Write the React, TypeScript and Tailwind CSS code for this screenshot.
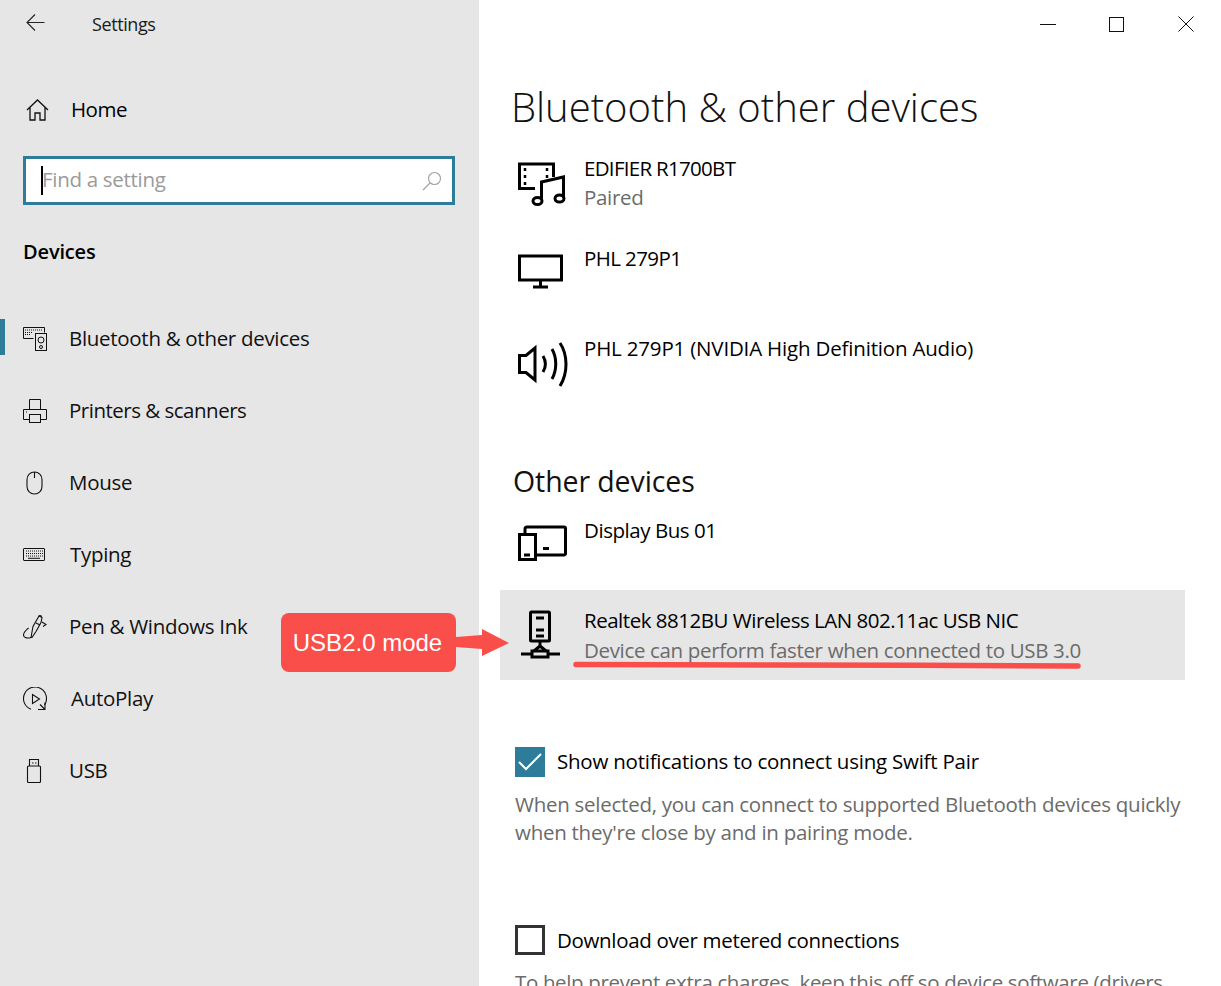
import type { ReactNode } from "react";

const font = { fontFamily: '"Open Sans", "Noto Sans", sans-serif' };

// Thin sidebar icons, drawn on a 24px box
const BluetoothIcon = () => (
  <svg width="24" height="24" viewBox="0 0 24 24" fill="none" stroke="#111" strokeWidth="1">
    <path d="M10.5 11.5H.5V.5h21v5" />
    <path d="M2 3h17M2 5.500h8M2 7.500h6" strokeDasharray="1 1" />
    <rect x="12.500" y="6.500" width="11" height="17" />
    <circle cx="18" cy="13" r="3" />
    <circle cx="18" cy="20" r="1.500" />
  </svg>
);
const PrinterIcon = () => (
  <svg width="24" height="24" viewBox="0 0 24 24" fill="none" stroke="#111" strokeWidth="1">
    <path d="M6.500 10V.5h11V10" />
    <path d="M6 20.500H.5V10.500h23v10H18" />
    <rect x="6.500" y="15.500" width="11" height="8" />
    <path d="M3 13h1" />
  </svg>
);
const MouseIcon = () => (
  <svg width="18" height="24" viewBox="0 0 18 24" fill="none" stroke="#111" strokeWidth="1.100">
    <rect x="1" y="1" width="15" height="22" rx="7.500" />
    <path d="M8.500 1v6" />
  </svg>
);
const KeyboardIcon = () => (
  <svg width="24" height="24" viewBox="0 0 24 24" fill="none" stroke="#111" strokeWidth="1">
    <rect x=".5" y="5.500" width="21" height="12" rx=".5" />
    <path d="M3 8h17M3 10.500h17M3 13h17" strokeDasharray="1 1" strokeWidth="1.200" />
    <path d="M5 15.300h12" />
  </svg>
);
const PenIcon = () => (
  <svg width="24" height="24" viewBox="0 0 24 24" fill="none" stroke="#111" strokeWidth="1.100">
    <path d="M8 22.500 10 11.500 16 1l3 1.500-1 5-5 9-4 6z" />
    <path d="M13 8l4 2M16 1l1-.5 2 1M19 7l4 2.500-3 2" />
    <path d="M8 22.500C3 24 .5 22 .5 20c0-3 3-5 5-7" />
  </svg>
);
const AutoPlayIcon = () => (
  <svg width="24" height="24" viewBox="0 0 24 24" fill="none" stroke="#111" strokeWidth="1.100">
    <path d="M8 22.300A11.500 11.500 0 1 1 21.500 18" />
    <path d="M9.500 7.500v9l7-4.500z" />
    <path d="M22 15.500v7h-7M22 22.500l-5-5" />
  </svg>
);
const UsbIcon = () => (
  <svg width="18" height="24" viewBox="0 0 18 24" fill="none" stroke="#111" strokeWidth="1.100">
    <path d="M4.500 7V.5h9V7" />
    <rect x="2.500" y="7" width="13" height="16.500" rx="1" />
    <path d="M7 4h1.500M10 4h1.500" />
  </svg>
);

const nav: { label: string; icon: ReactNode; active?: boolean; textClass: string; iconClass: string }[] = [
  { label: "Bluetooth & other devices", icon: <BluetoothIcon />, active: true, textClass: "tracking-[-0.3px]", iconClass: "w-[46px]" },
  { label: "Printers & scanners", icon: <PrinterIcon />, textClass: "tracking-[-0.5px]", iconClass: "w-[46px]" },
  { label: "Mouse", icon: <MouseIcon />, textClass: "tracking-[-0.3px]", iconClass: "w-[43px] ml-[3px]" },
  { label: "Typing", icon: <KeyboardIcon />, textClass: "tracking-[-0.3px] ml-[1px]", iconClass: "w-[46px]" },
  { label: "Pen & Windows Ink", icon: <PenIcon />, textClass: "tracking-[-0.3px]", iconClass: "w-[46px]" },
  { label: "AutoPlay", icon: <AutoPlayIcon />, textClass: "tracking-[-0.3px] ml-[2px]", iconClass: "w-[46px]" },
  { label: "USB", icon: <UsbIcon />, textClass: "tracking-[-0.3px]", iconClass: "w-[44px] ml-[2px]" },
];

// Heavy device icons on the right
const MediaIcon = () => (
  <svg width="50" height="46" viewBox="0 0 50 46" fill="none" stroke="#000" strokeWidth="3">
    <path d="M17 26.500H1.500V2h34v13" />
    <path d="M7 6v3M7 13v3M7 20v3M29 6v3M29 13v3" strokeWidth="2.500" />
    <path d="M23.500 38V20l22-5v21" />
    <ellipse cx="19.500" cy="39" rx="4.500" ry="3.500" />
    <ellipse cx="41.500" cy="36.500" rx="4.500" ry="3.500" />
  </svg>
);
const MonitorIcon = () => (
  <svg width="50" height="46" viewBox="0 0 50 46" fill="none" stroke="#000" strokeWidth="3">
    <rect x="1.500" y="12" width="42" height="24" />
    <path d="M22.500 36v7M15 43h15" />
  </svg>
);
const SpeakerIcon = () => (
  <svg width="50" height="46" viewBox="0 0 50 46" fill="none" stroke="#000" strokeWidth="3">
    <path d="M1.500 14.500h6.500L17 7v32l-9-7.500H1.500z" />
    <path d="M25 15c3 5 3 11 0 16M34 8c5 9 5 21 0 30M42 2c8 12 8 30 0 43" />
  </svg>
);
const DisplayBusIcon = () => (
  <svg width="50" height="46" viewBox="0 0 50 46" fill="none" stroke="#000" strokeWidth="3">
    <path d="M7 10V5a2 2 0 0 1 2-2h37a1.500 1.500 0 0 1 1.500 1.500v25a1.500 1.500 0 0 1-1.500 1.500H18" />
    <rect x="1.500" y="10.500" width="16" height="25" />
    <path d="M25 24.500h6M6 31h6" />
  </svg>
);
const NetworkIcon = () => (
  <svg width="42" height="50" viewBox="0 0 42 50" fill="none" stroke="#000" strokeWidth="3">
    <rect x="10.500" y="2" width="19" height="29" rx="1" />
    <path d="M16 8h8M16 20h8M16 26h8" />
    <path d="M20 31v5M20 36l-6 5M20 36l6 5" />
    <rect x="12" y="41" width="16" height="6" />
    <path d="M1 44h11M28 44h12" />
  </svg>
);

const devices: { name: string; sub?: string; icon: ReactNode; iconClass: string; nameClass: string }[] = [
  { name: "EDIFIER R1700BT", sub: "Paired", icon: <MediaIcon />, iconClass: "mt-[22px]", nameClass: "tracking-[-0.7px]" },
  { name: "PHL 279P1", icon: <MonitorIcon />, iconClass: "mt-[14px]", nameClass: "tracking-[-0.6px]" },
  { name: "PHL 279P1 (NVIDIA High Definition Audio)", icon: <SpeakerIcon />, iconClass: "mt-[21px]", nameClass: "tracking-[-0.18px]" },
];

export default function App() {
  return (
    <div className="relative flex h-[986px] w-[1221px] overflow-hidden bg-white text-black" style={font}>
      <aside className="w-[479px] shrink-0 bg-[#e6e6e6]">
        <div className="flex h-[48px] items-center pl-[26px]">
          <svg width="19" height="18" viewBox="0 0 19 18" fill="none" stroke="#222" strokeWidth="1.100" className="-mt-[2px]">
            <path d="M18.500 8.500H1M9 .5l-8 8 8 8" />
          </svg>
          <span className="ml-[47px] text-[18px] tracking-[-0.4px] text-[#1a1a1a]">Settings</span>
        </div>
        <div className="mt-[26px] flex h-[72px] items-center pl-[26px]">
          <svg width="23" height="22" viewBox="0 0 23 22" fill="none" stroke="#111" strokeWidth="1.300">
            <path d="M1 11 11.500 1 22 11M4 8.500V21h5v-7h5v7h5V8.500" />
          </svg>
          <span className="ml-[22px] pb-[2px] text-[20.500px] tracking-[-0.5px]">Home</span>
        </div>
        <div className="mx-[23px] mt-[10px] flex h-[49px] w-[432px] items-center border-[3px] border-[#2d7d9a] bg-white pl-[15px] pr-[10px]">
          <span className="h-[29px] w-[2px] bg-black" />
          <span className="ml-[-1px] flex-1 pb-[2px] text-[20.500px] tracking-[-0.3px] text-[#9a9a9a]">Find a setting</span>
          <svg width="20" height="20" viewBox="0 0 20 20" fill="none" stroke="#a0a0a0" strokeWidth="1.100">
            <circle cx="12.500" cy="7.500" r="6" />
            <path d="M8 12 1 19" />
          </svg>
        </div>
        <h2 className="mt-[32px] pl-[23px] text-[20px] font-semibold leading-[30px] tracking-[-0.15px]">Devices</h2>
        <nav className="mt-[36px]">
          {nav.map((item) => (
            <div key={item.label} className="relative flex h-[72px] items-center pl-[23px]">
              {item.active && <span className="absolute left-0 top-[16px] h-[36px] w-[5px] bg-[#2d7d9a]" />}
              <span className={`flex items-center ${item.iconClass}`}>{item.icon}</span>
              <span className={`pb-[2px] text-[20.500px] text-[#111] ${item.textClass}`}>{item.label}</span>
            </div>
          ))}
        </nav>
      </aside>

      <main className="min-w-0 flex-1">
        <div className="flex h-[48px] justify-end pr-[1px]">
          <div className="flex w-[69px] items-center justify-center">
            <span className="block h-[1px] w-[16px] bg-[#111]" />
          </div>
          <div className="flex w-[69px] items-center justify-center">
            <span className="block h-[15px] w-[15px] border border-[#111]" />
          </div>
          <div className="flex w-[69px] items-center justify-center">
            <svg width="16" height="16" viewBox="0 0 16 16" stroke="#111" strokeWidth="1">
              <path d="M.5.5l15 15M15.500.5l-15 15" />
            </svg>
          </div>
        </div>
        <div className="h-[92px] pl-[32px] pt-[29px]">
          <h1 className="text-[40px] font-light leading-[60px] tracking-[0px] text-[#111]">Bluetooth &amp; other devices</h1>
        </div>

        {devices.map((d) => (
          <div key={d.name} className="ml-[21px] flex h-[90px] w-[685px] pl-[18px]">
            <div className={`w-[66px] shrink-0 ${d.iconClass}`}>{d.icon}</div>
            <div className="pt-[14px] text-[20.500px] leading-[29px]">
              <div className={d.nameClass}>{d.name}</div>
              {d.sub && <div className="tracking-[-0.3px] text-[#6b6b6b]">{d.sub}</div>}
            </div>
          </div>
        ))}

        <h2 className="flex h-[92px] items-center pl-[34px] pt-[50px] text-[28.500px] tracking-[-0.1px] text-[#111]">Other devices</h2>

        <div className="ml-[21px] flex h-[88px] w-[685px] pl-[18px]">
          <div className="mt-[22px] w-[66px] shrink-0"><DisplayBusIcon /></div>
          <div className="pt-[14px] text-[20.500px] leading-[29px] tracking-[-0.45px]">Display Bus 01</div>
        </div>
        <div className="ml-[21px] flex h-[90px] w-[685px] bg-[#e6e6e6] pl-[20px]">
          <div className="mt-[20px] w-[64px] shrink-0"><NetworkIcon /></div>
          <div className="pt-[15px] text-[20.500px] leading-[30px]">
            <div className="tracking-[-0.48px]">Realtek 8812BU Wireless LAN 802.11ac USB NIC</div>
            <div className="tracking-[-0.34px] text-[#6b6b6b]">Device can perform faster when connected to USB 3.0</div>
          </div>
        </div>

        <div className="ml-[36px] mt-[67px] flex h-[30px] items-center">
          <span className="flex h-[30px] w-[30px] items-center justify-center bg-[#2d7d9a]">
            <svg width="26" height="20" viewBox="0 0 26 20" fill="none" stroke="#fff" strokeWidth="2">
              <path d="M2 10l7 7L24 2" />
            </svg>
          </span>
          <span className="ml-[12px] pb-[2px] text-[20.500px] tracking-[-0.23px]">Show notifications to connect using Swift Pair</span>
        </div>
        <p className="ml-[36px] mt-[13px] w-[680px] whitespace-nowrap text-[20.500px] leading-[28px] tracking-[-0.26px] text-[#6b6b6b]">
          When selected, you can connect to supported Bluetooth devices quickly
          <br />
          when they're close by and in pairing mode.
        </p>
        <div className="ml-[36px] mt-[79px] flex h-[30px] items-center">
          <span className="h-[30px] w-[30px] border-[3px] border-[#333]" />
          <span className="ml-[12px] text-[20.500px] tracking-[-0.33px]">Download over metered connections</span>
        </div>
        <p className="ml-[36px] mt-[13px] whitespace-nowrap text-[20.500px] leading-[28px] tracking-[-0.35px] text-[#6b6b6b]">
          To help prevent extra charges, keep this off so device software (drivers
        </p>
      </main>

      {/* red annotation drawn over the screenshot */}
      <div
        className="absolute left-[281px] top-[613px] flex h-[59px] w-[175px] items-center justify-center rounded-[8px] bg-[#f94e4a] pr-[2px] text-[24px] text-white"
        style={{ fontFamily: '"Liberation Sans", Arial, sans-serif' }}
      >
        USB2.0 mode
      </div>
      <svg className="absolute left-[456px] top-[625px]" width="56" height="36" viewBox="0 0 56 36" fill="#f94e4a">
        <path d="M0 12l26-2V4l27 14-27 13v-7L0 22z" />
      </svg>
      <svg className="absolute left-[570px] top-[658px]" width="516" height="14" viewBox="0 0 516 14" fill="none" stroke="#f94e4a" strokeWidth="5.500" strokeLinecap="round">
        <path d="M6 6.500C160 6.500 340 7 508 8" />
      </svg>
    </div>
  );
}
